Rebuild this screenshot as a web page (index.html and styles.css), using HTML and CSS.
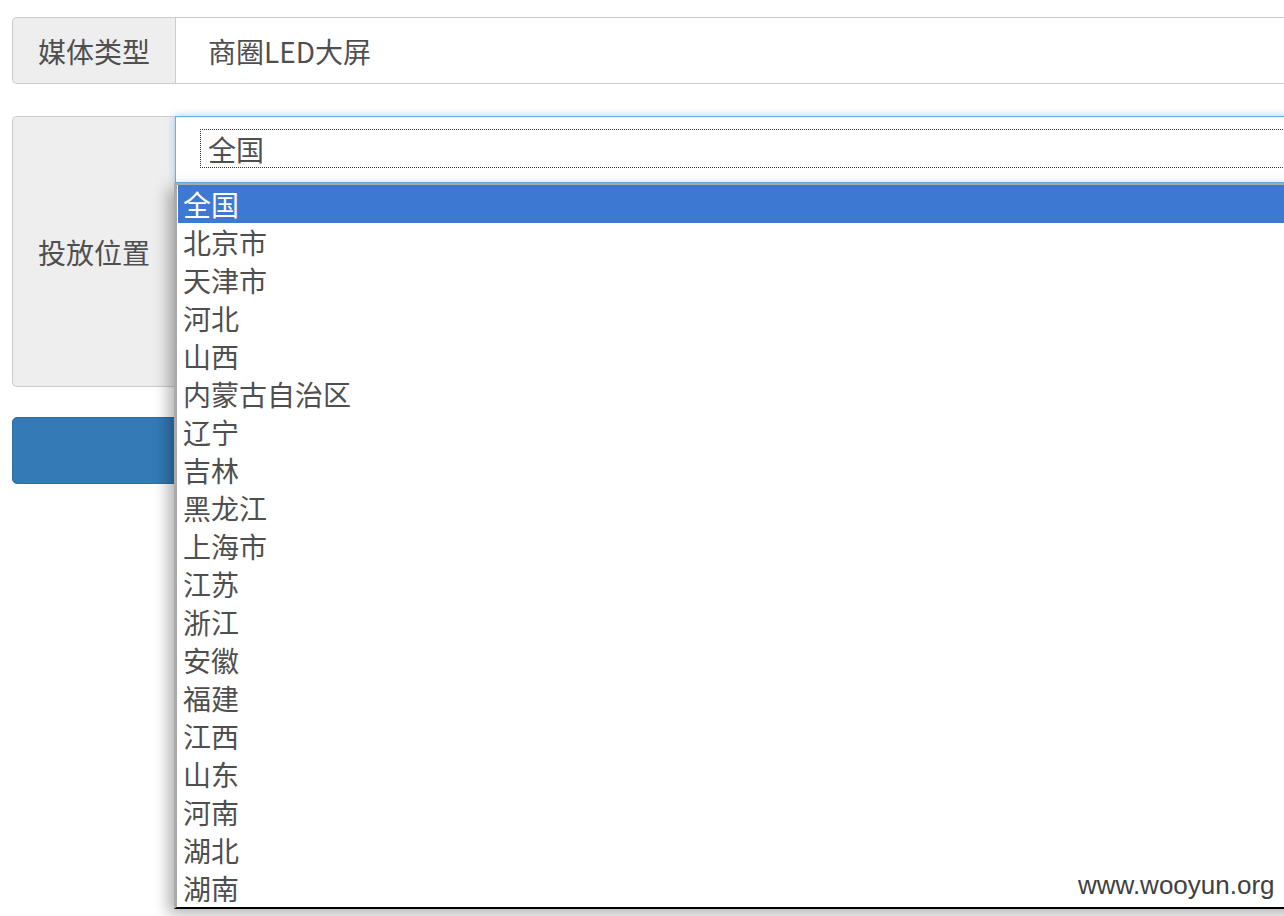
FILE: index.html
```html
<!DOCTYPE html>
<html lang="zh-CN">
<head>
<meta charset="utf-8">
<title>投放</title>
<link rel="stylesheet" href="styles.css">
</head>
<body>
<div class="page">
  <div class="group group-media">
    <div class="addon">媒体类型</div>
    <div class="field input-field">商圈LED大屏</div>
  </div>

  <div class="group group-pos">
    <div class="addon addon-tall">投放位置</div>
    <div class="select-col">
      <div class="field select-field"><span class="focus-ring">全国</span></div>
      <ul class="dropdown">
        <li class="opt active">全国</li>
        <li class="opt">北京市</li>
        <li class="opt">天津市</li>
        <li class="opt">河北</li>
        <li class="opt">山西</li>
        <li class="opt">内蒙古自治区</li>
        <li class="opt">辽宁</li>
        <li class="opt">吉林</li>
        <li class="opt">黑龙江</li>
        <li class="opt">上海市</li>
        <li class="opt">江苏</li>
        <li class="opt">浙江</li>
        <li class="opt">安徽</li>
        <li class="opt">福建</li>
        <li class="opt">江西</li>
        <li class="opt">山东</li>
        <li class="opt">河南</li>
        <li class="opt">湖北</li>
        <li class="opt">湖南</li>
      </ul>
    </div>
  </div>

  <div class="btn-primary"></div>
</div>
<div class="watermark">www.wooyun.org</div>
</body>
</html>
```

FILE: styles.css
```css
html, body {
  margin: 0;
  padding: 0;
  background: #fff;
  overflow: hidden;
  width: 1284px;
  height: 916px;
}

body {
  font-family: "Noto Sans CJK SC", "Liberation Sans", sans-serif;
  color: #555;
  position: relative;
}

.page {
  width: 1320px;
  padding: 17px 0 0 12px;
  box-sizing: border-box;
}

.group {
  display: flex;
}

.group-media {
  height: 67px;
}

.group-pos {
  margin-top: 32px;
  height: 271px;
}

.addon {
  width: 163px;
  box-sizing: border-box;
  flex: none;
  background: #eee;
  border: 1px solid #ccc;
  border-right: 0;
  border-radius: 5px 0 0 5px;
  font-size: 28px;
  display: flex;
  align-items: center;
  justify-content: center;
  color: #4f4f4f;
}

.field {
  flex: 1;
  box-sizing: border-box;
  background: #fff;
  border: 1px solid #ccc;
  font-size: 28px;
  color: #4f4f4f;
}

.input-field {
  display: flex;
  align-items: center;
  padding-left: 32px;
  padding-top: 1px;
}

.select-col {
  flex: 1;
  position: relative;
}

.select-field {
  height: 67px;
  border: 1px solid #66afe9;
  box-shadow: inset 0 1px 1px rgba(0,0,0,.075), 0 0 8px rgba(102,175,233,.6);
  padding: 12px 0 0 24px;
}

.focus-ring {
  display: block;
  height: 39px;
  box-sizing: border-box;
  border: 1px dotted #333;
  border-right: 0;
  line-height: 39px;
  padding-left: 7px;
}

.dropdown {
  position: absolute;
  left: -1px;
  top: 67px;
  right: 0;
  margin: 0;
  padding: 0;
  list-style: none;
  background: #fff;
  border-top: 2px solid #aaa;
  border-left: 3px solid #aaa;
  border-bottom: 2px solid #000;
  box-shadow: -6px 5px 14px rgba(0,0,0,.3);
  z-index: 5;
}

.opt {
  padding-top: 1px;
  line-height: 37px;
  font-size: 28px;
  padding-left: 6px;
  color: #4f4f4f;
  white-space: nowrap;
}

.opt.active {
  background: #3d78d3;
  color: #fff;
  margin-left: 1px;
  padding-left: 5px;
}

.btn-primary {
  margin-top: 30px;
  height: 67px;
  box-sizing: border-box;
  background: #337ab7;
  border: 1px solid #2e6da4;
  border-radius: 5px;
}

.watermark {
  position: absolute;
  left: 1078px;
  top: 870px;
  font-family: "Liberation Sans", sans-serif;
  font-size: 26px;
  line-height: 30px;
  color: #3f3f3f;
  z-index: 10;
}
```
